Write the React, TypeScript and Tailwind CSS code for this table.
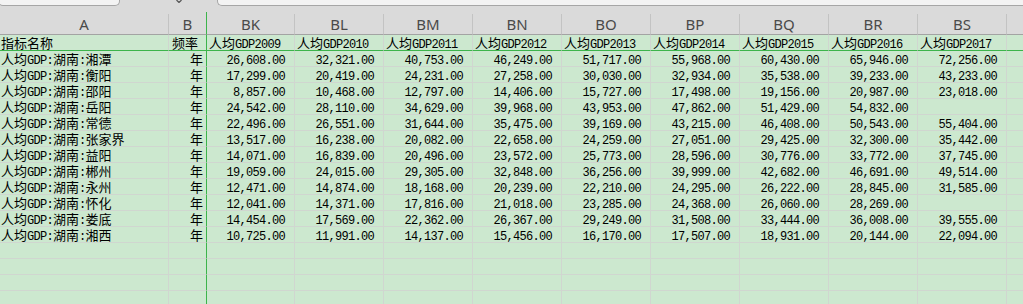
import { Fragment } from "react"

const cols = "grid grid-cols-[169px_38px_88px_repeat(9,89px)]"

const letters = ["A", "B", "BK", "BL", "BM", "BN", "BO", "BP", "BQ", "BR", "BS", ""]

const years = [2009, 2010, 2011, 2012, 2013, 2014, 2015, 2016, 2017]

const rows: [string, string[]][] = [
  ["湘潭", ["26,608.00", "32,321.00", "40,753.00", "46,249.00", "51,717.00", "55,968.00", "60,430.00", "65,946.00", "72,256.00"]],
  ["衡阳", ["17,299.00", "20,419.00", "24,231.00", "27,258.00", "30,030.00", "32,934.00", "35,538.00", "39,233.00", "43,233.00"]],
  ["邵阳", ["8,857.00", "10,468.00", "12,797.00", "14,406.00", "15,727.00", "17,498.00", "19,156.00", "20,987.00", "23,018.00"]],
  ["岳阳", ["24,542.00", "28,110.00", "34,629.00", "39,968.00", "43,953.00", "47,862.00", "51,429.00", "54,832.00", ""]],
  ["常德", ["22,496.00", "26,551.00", "31,644.00", "35,475.00", "39,169.00", "43,215.00", "46,408.00", "50,543.00", "55,404.00"]],
  ["张家界", ["13,517.00", "16,238.00", "20,082.00", "22,658.00", "24,259.00", "27,051.00", "29,425.00", "32,300.00", "35,442.00"]],
  ["益阳", ["14,071.00", "16,839.00", "20,496.00", "23,572.00", "25,773.00", "28,596.00", "30,776.00", "33,772.00", "37,745.00"]],
  ["郴州", ["19,059.00", "24,015.00", "29,305.00", "32,848.00", "36,256.00", "39,999.00", "42,682.00", "46,691.00", "49,514.00"]],
  ["永州", ["12,471.00", "14,874.00", "18,168.00", "20,239.00", "22,210.00", "24,295.00", "26,222.00", "28,845.00", "31,585.00"]],
  ["怀化", ["12,041.00", "14,371.00", "17,816.00", "21,018.00", "23,285.00", "24,368.00", "26,060.00", "28,269.00", ""]],
  ["娄底", ["14,454.00", "17,569.00", "22,362.00", "26,367.00", "29,249.00", "31,508.00", "33,444.00", "36,008.00", "39,555.00"]],
  ["湘西", ["10,725.00", "11,991.00", "14,137.00", "15,456.00", "16,170.00", "17,507.00", "18,931.00", "20,144.00", "22,094.00"]],
]

// CJK runs and latin runs get different fonts so the latin part stays half width
const Mixed = ({ text }: { text: string }) => (
  <span className="leading-[15px]">
    {text.split(/([\u3400-\u9fff]+)/).map((part, i) =>
      /[\u3400-\u9fff]/.test(part) ? (
        <span key={i} className="font-['Noto_Sans_CJK_SC',sans-serif] text-[13px]">
          {part}
        </span>
      ) : (
        <span key={i} className="font-['Liberation_Mono',monospace] text-[12px] tracking-[-0.7px]">
          {part}
        </span>
      )
    )}
  </span>
)

const cellBase = "h-4 pt-[3px] flex items-center whitespace-nowrap border-r border-b border-[#d0d6d0] leading-[15px] text-black"

const App = () => {
  return (
    <div className="w-[1023px] h-[304px] overflow-hidden bg-[#cce8cf] select-none">
      {/* column header strip */}
      <div className="bg-[#dadada]">
        <div className="h-[14px] flex items-start">
          <div className="w-[122px] -ml-[2px] h-[6px] bg-[#f3f3f3] border border-t-0 border-[#a6a6a6] rounded-b-[5px]" />
          <div className="w-[97px] flex justify-center pl-[20px]">
            <svg width="6" height="3" viewBox="0 0 6 3">
              <path d="M0.5 0 L3 2.5 L5.5 0" fill="none" stroke="#555" strokeWidth="1.2" />
            </svg>
          </div>
          <div className="flex-1 h-[6px] bg-[#f3f3f3] border border-t-0 border-r-0 border-[#a6a6a6] rounded-bl-[5px]" />
        </div>
        <div className={cols}>
          {letters.map((l, i) => (
            <div
              key={i}
              className={
                "h-[21px] pb-[1px] flex items-center justify-center border-b border-r border-[#c3c3c3] border-b-[#a3a3a3] font-['Noto_Sans',sans-serif] text-[15px] leading-5 text-[#4a4a4a] " +
                (i === 1 ? "border-r-[#3cb44b] relative" : "")
              }
            >
              {l}
              {i === 1 && <span className="absolute -right-px -top-[2px] h-[2px] w-px bg-[#3cb44b]" />}
            </div>
          ))}
        </div>
      </div>

      {/* sheet body */}
      <div className={cols}>
        {/* row 1: field names */}
        <div className={cellBase + " pl-[1px] border-b-[#3cb44b]"}>
          <Mixed text="指标名称" />
        </div>
        <div className={cellBase + " pl-[3px] border-b-[#3cb44b] border-r-[#3cb44b]"}>
          <Mixed text="频率" />
        </div>
        {years.map((y) => (
          <div key={y} className={cellBase + " pl-[2px] border-b-[#3cb44b]"}>
            <Mixed text={`人均GDP${y}`} />
          </div>
        ))}
        <div className={cellBase + " border-b-[#3cb44b]"} />

        {rows.map(([city, vals]) => (
          <Fragment key={city}>
            <div className={cellBase + " pl-[1px]"}>
              <Mixed text={`人均GDP:湖南:${city}`} />
            </div>
            <div className={cellBase + " justify-end pr-[3px] border-r-[#3cb44b]"}>
              <Mixed text="年" />
            </div>
            {vals.map((v, i) => (
              <div key={i} className={cellBase + " justify-end pr-[9px]"}>
                <Mixed text={v} />
              </div>
            ))}
            <div className={cellBase} />
          </Fragment>
        ))}

        {[0, 1, 2, 3].map((r) =>
          letters.map((_, i) => (
            <div key={`${r}-${i}`} className={cellBase + (i === 1 ? " border-r-[#3cb44b]" : "")} />
          ))
        )}
      </div>
    </div>
  )
}

export default App
